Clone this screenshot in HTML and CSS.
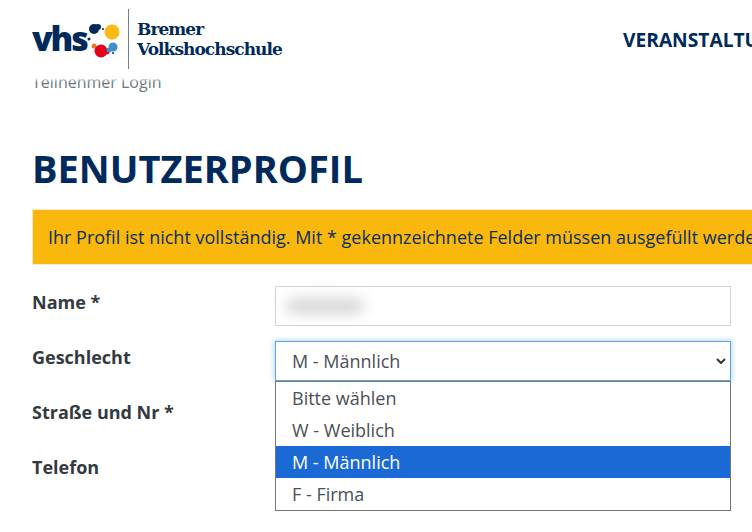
FILE: index.html
```html
<!DOCTYPE html>
<html lang="de">
<head>
    <meta charset="UTF-8">
    <meta name="viewport" content="width=device-width, initial-scale=1.0">
    <title>Benutzerprofil</title>
    <link rel="stylesheet" href="styles.css">
</head>
<body>
    <div class="header">
        <div class="logo">
            <span class="logo-vhs">vhs</span>
            <svg class="logo-dots" width="38" height="50" viewBox="0 0 38 50">
                <circle cx="22" cy="18" r="7.5" fill="#fdb913"/>
                <circle cx="4" cy="15" r="5" fill="#002a5c"/>
                <circle cx="8" cy="13" r="3" fill="#002a5c"/>
                <circle cx="13" cy="15" r="1" fill="#002a5c"/>
                <circle cx="-1" cy="25" r="1.5" fill="#002a5c"/>
                <circle cx="4" cy="32" r="2.5" fill="#e8792b"/>
                <circle cx="11" cy="37" r="6.5" fill="#e2001a"/>
                <circle cx="17" cy="38" r="2.5" fill="#e2001a"/>
                <circle cx="23" cy="33" r="4.5" fill="#3f8fc9"/>
                <circle cx="19" cy="36" r="2.5" fill="#3f8fc9"/>
                <circle cx="23" cy="39" r="1" fill="#002a5c"/>
            </svg>
            <div class="logo-line"></div>
            <div class="logo-name">Bremer<br>Volkshochschule</div>
        </div>
        <div class="nav">VERANSTALTUNGEN</div>
    </div>
    <div class="breadcrumb">Teilnehmer Login</div>
    <h1>BENUTZERPROFIL</h1>
    <div class="alert">Ihr Profil ist nicht vollständig. Mit * gekennzeichnete Felder müssen ausgefüllt werden.</div>
    <form class="form">
        <label>Name *</label>
        <div class="field"><div class="blurred"></div></div>
        <label>Geschlecht</label>
        <div class="field field-focus">
            <span>M - Männlich</span>
            <svg class="chevron" width="10" height="6" viewBox="0 0 10 6"><path d="M1 1l4 4 4-4" fill="none" stroke="#333" stroke-width="2"/></svg>
            <ul class="options">
                <li>Bitte wählen</li>
                <li>W - Weiblich</li>
                <li class="selected">M - Männlich</li>
                <li>F - Firma</li>
            </ul>
        </div>
        <label>Straße und Nr *</label>
        <div class="field"></div>
        <label>Telefon</label>
        <div class="field"></div>
    </form>
</body>
</html>
```

FILE: styles.css
```css
html, body {
    height: 532px;
    overflow: hidden;
}
body {
    margin: 0;
    font-family: "Open Sans", sans-serif;
    font-size: 18px;
    background-color: #ffffff;
    color: #495057;
}
.header {
    position: relative;
    z-index: 2;
    display: flex;
    align-items: center;
    height: 78px;
    padding-left: 32px;
    background-color: #ffffff;
    box-shadow: 0 2px 3px #ffffff;
    white-space: nowrap;
}
.logo {
    display: flex;
    align-items: center;
    width: 591px;
    flex-shrink: 0;
}
.logo-vhs {
    width: 58px;
    font-family: "Open Sans", sans-serif;
    font-size: 34px;
    font-weight: 800;
    letter-spacing: -2.2px;
    line-height: 40px;
    color: #002a5c;
    padding-bottom: 3px;
}
.logo-dots {
    overflow: visible;
}
.logo-line {
    width: 1px;
    height: 60px;
    background-color: #6d7f96;
}
.logo-name {
    margin-left: 8px;
    font-family: "DejaVu Serif", serif;
    font-size: 17px;
    font-weight: 700;
    line-height: 20px;
    letter-spacing: -0.95px;
    color: #002a5c;
}
.nav {
    font-size: 19.2px;
    font-weight: 700;
    color: #002a5c;
}
.breadcrumb {
    position: relative;
    z-index: 1;
    margin-top: -6px;
    padding-left: 32px;
    font-size: 16px;
    line-height: 20px;
    color: #6c757d;
}
h1 {
    margin: 54px 0 0;
    padding-left: 32px;
    font-size: 38px;
    font-weight: 700;
    line-height: 44px;
    color: #002a5c;
}
.alert {
    box-sizing: border-box;
    margin: 19px 0 0 32px;
    padding: 0 15px;
    height: 56px;
    line-height: 54px;
    font-size: 18px;
    white-space: nowrap;
    background-color: #fab80d;
    border: 1px solid #f1e8cc;
    border-right: none;
    color: #0b2f55;
}
.form {
    display: grid;
    grid-template-columns: 243px 456px;
    grid-auto-rows: 40px;
    row-gap: 15px;
    margin: 21px 0 0 32px;
}
label {
    font-weight: 700;
    font-size: 18px;
    line-height: 32px;
    color: #343a40;
}
.field {
    position: relative;
    display: flex;
    align-items: center;
    box-sizing: border-box;
    padding: 0 16px;
    border: 1px solid #ced4da;
    background-color: #ffffff;
}
.blurred {
    width: 78px;
    height: 16px;
    margin-left: -6px;
    background-color: #d6d6d6;
    border-radius: 8px;
    filter: blur(7px);
}
.field-focus {
    justify-content: space-between;
    padding-right: 4px;
    border-color: #5ea6e6;
    box-shadow: 0 0 5px 1px rgba(94, 166, 230, 0.45);
}
.options {
    position: absolute;
    z-index: 3;
    top: 39px;
    left: -1px;
    right: -1px;
    margin: 0;
    padding: 0;
    list-style: none;
    border: 1px solid #767676;
    background-color: #ffffff;
}
.options li {
    height: 32px;
    padding-left: 16px;
    line-height: 32px;
}
.options .selected {
    background-color: #1a69d4;
    color: #ffffff;
}
```
